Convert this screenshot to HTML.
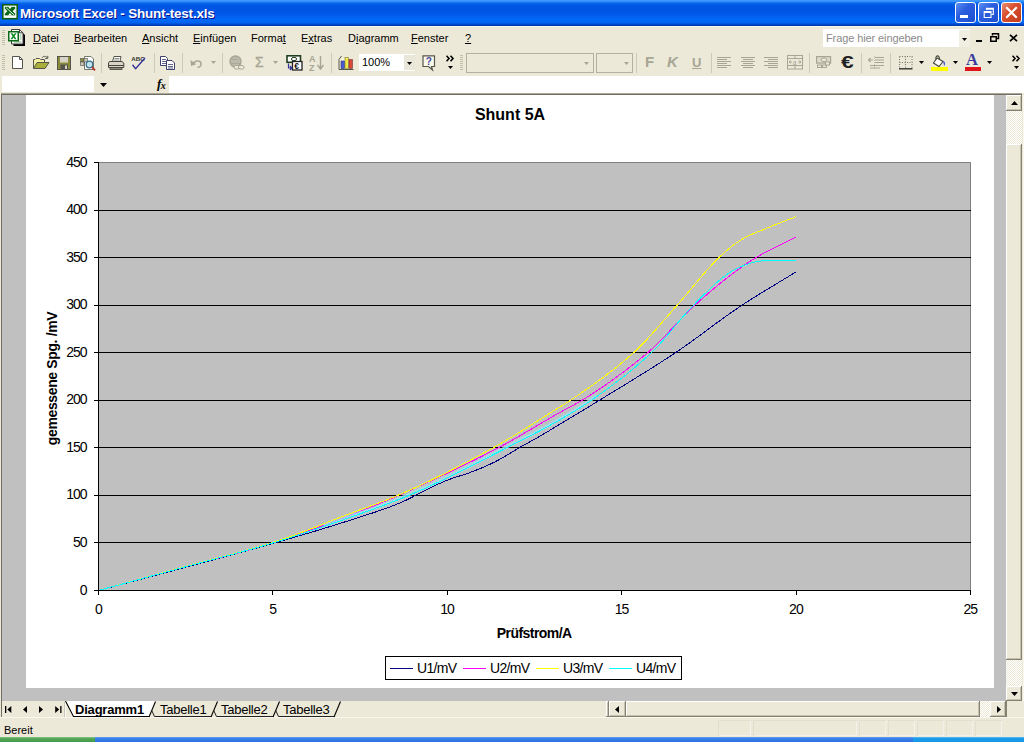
<!DOCTYPE html>
<html lang="de">
<head>
<meta charset="utf-8">
<title>Microsoft Excel - Shunt-test.xls</title>
<style>
html,body{margin:0;padding:0;}
body{width:1024px;height:742px;overflow:hidden;position:relative;background:#ece9d8;font-family:"Liberation Sans",sans-serif;font-size:11px;color:#000;}
.abs{position:absolute;}
#title{left:0;top:0;width:1024px;height:26px;background:linear-gradient(to bottom,#3f9bff 0%,#3793ff 5%,#1272f0 10%,#0560e6 15%,#0057e2 24%,#0054e3 40%,#0058ea 55%,#0263f5 68%,#0268f8 80%,#0263f0 87%,#0050d8 92%,#003fbb 96%,#0036a8 100%);}
#title .txt{left:20px;top:5px;color:#fff;font-weight:bold;font-size:13.5px;line-height:18px;white-space:nowrap;text-shadow:1px 1px 0 #0f1089;letter-spacing:-0.2px;}
.tbtn{top:3px;width:19px;height:19px;border:1px solid #fff;border-radius:3px;box-sizing:content-box;background:linear-gradient(135deg,#5b8ff0 0%,#2b5fe0 40%,#1c4fd0 100%);}
.tbtn.close{background:linear-gradient(135deg,#e8907a 0%,#d8502f 40%,#c23a1a 100%);}
#menubar{left:0;top:26px;width:1024px;height:24px;background:#ece9d8;border-top:1px solid #f6f5ee;box-sizing:border-box;}
.mi{top:8px;line-height:13px;font-size:11px;white-space:nowrap;}
.mi u{text-decoration:underline;}
#toolbar{left:0;top:50px;width:1024px;height:25px;background:#ece9d8;}
.sep{top:53px;width:1px;height:20px;background:#cdcaba;}
.ic{position:absolute;}
#formula{left:0;top:75px;width:1024px;height:18px;background:#ece9d8;}
#frame{left:0;top:93px;width:1024px;height:625px;background:#c0c0c0;}
#status{left:0;top:718px;width:1024px;height:19px;background:#ece9d8;}
#task{left:0;top:737px;width:1024px;height:5px;background:#2f74e0;}
.dither{background-color:#fff;background-image:linear-gradient(45deg,#ece9d8 25%,transparent 25%,transparent 75%,#ece9d8 75%),linear-gradient(45deg,#ece9d8 25%,transparent 25%,transparent 75%,#ece9d8 75%);background-size:2px 2px;background-position:0 0,1px 1px;}
.btn3d{background:#ece9d8;box-shadow:inset -1px -1px 0 #85826f,inset 1px 1px 0 #fff,inset -2px -2px 0 #c4c1b0;}
.tab{top:703px;font-size:13px;line-height:14px;white-space:nowrap;letter-spacing:-0.25px;}
</style>
</head>
<body>
<div id="title" class="abs">
<svg class="abs" style="left:2px;top:4px" width="16" height="16" viewBox="0 0 16 16" ><rect x="0" y="0" width="16" height="15.5" fill="#0a5c12"/><rect x="1.6" y="1.6" width="12.8" height="12.3" fill="#fff"/><rect x="2.8" y="2.8" width="10.4" height="8.6" fill="#0b6a17"/><path d="M6.2 2.8 L8 5 L9.8 2.8 Z M2.8 4.6 V9.8 L5.3 7.2 Z M13.2 4.6 V9.8 L10.7 7.2 Z M6 11.4 L8 9 L10 11.4 Z" fill="#fff"/><path d="M4 3.6 L12.2 11" stroke="#fff" stroke-width="0.9"/></svg>
<div class="abs txt">Microsoft Excel - Shunt-test.xls</div>
<div class="abs tbtn" style="left:955px;top:2px"></div>
<div class="abs" style="left:960px;top:15px;width:8px;height:3px;background:#fff"></div>
<div class="abs tbtn" style="left:978px;top:2px"></div>
<svg class="abs" style="left:983px;top:7px" width="12" height="12" viewBox="0 0 12 12" ><path d="M3.5 3 V1.2 H10.3 V7.5 H8.5 M3.5 2.2 H10.3" fill="none" stroke="#fff" stroke-width="1.1"/><path d="M1.2 4.5 H8 V10.5 H1.2 Z M1.2 5.5 H8" fill="none" stroke="#fff" stroke-width="1.1"/></svg>
<div class="abs tbtn close" style="left:1001px;top:2px"></div>
<svg class="abs" style="left:1005px;top:6px" width="13" height="13" viewBox="0 0 13 13" ><path d="M2 2 L11 11 M11 2 L2 11" stroke="#fff" stroke-width="2.2" stroke-linecap="square"/></svg>
</div>
<div id="menubar" class="abs"></div>
<svg class="abs" style="left:2px;top:30px" width="4" height="16" viewBox="0 0 4 16" ><rect x="0" y="0" width="3" height="1" fill="#c1beac"/><rect x="0" y="2" width="3" height="1" fill="#c1beac"/><rect x="0" y="4" width="3" height="1" fill="#c1beac"/><rect x="0" y="6" width="3" height="1" fill="#c1beac"/><rect x="0" y="8" width="3" height="1" fill="#c1beac"/><rect x="0" y="10" width="3" height="1" fill="#c1beac"/><rect x="0" y="12" width="3" height="1" fill="#c1beac"/><rect x="0" y="14" width="3" height="1" fill="#c1beac"/></svg>
<svg class="abs" style="left:8px;top:29px" width="18" height="18" viewBox="0 0 18 18" ><path d="M5.5 2.5 H13 L17 6 V17 H5.5 Z" fill="#000"/><path d="M3.5 0.5 H11.5 L15 3.8 V15 H3.5 Z" fill="#fff" stroke="#3a3a3a" stroke-width="1"/><path d="M11.5 0.5 V3.8 H15" fill="none" stroke="#3a3a3a" stroke-width="1"/><path d="M11.5 6 H13.5 M11.5 8 H13.5 M11.5 10 H13.5 M6 13 H13.5" stroke="#7bb07b" stroke-width="1"/><rect x="0.75" y="2.75" width="9.5" height="9" fill="#fff" stroke="#0b6a17" stroke-width="1.5"/><path d="M2.5 4.3 L4.5 4.3 L5.5 5.8 L6.8 4.3 L8.5 4.3 L6.5 7.2 L8.5 10.2 L6.7 10.2 L5.5 8.5 L4.3 10.2 L2.5 10.2 L4.6 7.2 Z" fill="#0b8a1d"/></svg>
<div class="abs mi" style="left:33px;top:32px"><u>D</u>atei</div>
<div class="abs mi" style="left:74px;top:32px"><u>B</u>earbeiten</div>
<div class="abs mi" style="left:142px;top:32px"><u>A</u>nsicht</div>
<div class="abs mi" style="left:193px;top:32px"><u>E</u>infügen</div>
<div class="abs mi" style="left:251px;top:32px">Forma<u>t</u></div>
<div class="abs mi" style="left:301px;top:32px">E<u>x</u>tras</div>
<div class="abs mi" style="left:348px;top:32px">D<u>i</u>agramm</div>
<div class="abs mi" style="left:411px;top:32px"><u>F</u>enster</div>
<div class="abs mi" style="left:465px;top:32px"><u>?</u></div>
<div class="abs" style="left:823px;top:29px;width:147px;height:18px;background:#fff"></div>
<div class="abs mi" style="left:826px;top:32px;color:#8a8a8a;letter-spacing:-0.1px">Frage hier eingeben</div>
<div class="abs" style="left:959px;top:30px;width:11px;height:17px;background:#ece9d8;opacity:.75"></div>
<svg class="abs" style="left:962.0px;top:37.5px" width="5" height="3" viewBox="0 0 5 3" ><path d="M0 0 H5 L2.5 3 Z" fill="#000"/></svg>
<div class="abs" style="left:976px;top:40px;width:6px;height:2px;background:#000"></div>
<svg class="abs" style="left:990px;top:33px" width="10" height="10" viewBox="0 0 10 10" ><path d="M2.5 2.5 V0.75 H8.5 V5.5 H6.5" fill="none" stroke="#000" stroke-width="1.5"/><rect x="0.75" y="3.75" width="5.5" height="4.5" fill="none" stroke="#000" stroke-width="1.5"/></svg>
<svg class="abs" style="left:1009px;top:34px" width="9" height="8" viewBox="0 0 9 8" ><path d="M1 0.8 L8 7.2 M8 0.8 L1 7.2" stroke="#000" stroke-width="1.7"/></svg>
<div id="toolbar" class="abs"></div>
<svg class="abs" style="left:2px;top:55px" width="4" height="16" viewBox="0 0 4 16" ><rect x="0" y="0" width="3" height="1" fill="#c1beac"/><rect x="0" y="2" width="3" height="1" fill="#c1beac"/><rect x="0" y="4" width="3" height="1" fill="#c1beac"/><rect x="0" y="6" width="3" height="1" fill="#c1beac"/><rect x="0" y="8" width="3" height="1" fill="#c1beac"/><rect x="0" y="10" width="3" height="1" fill="#c1beac"/><rect x="0" y="12" width="3" height="1" fill="#c1beac"/><rect x="0" y="14" width="3" height="1" fill="#c1beac"/></svg>
<svg class="abs" style="left:12px;top:56px" width="12" height="14" viewBox="0 0 12 14" ><path d="M0.5 0.5 H7.5 L10.5 3.5 V12.5 H0.5 Z" fill="#fff" stroke="#55554d"/><path d="M7.5 0.5 V3.5 H10.5" fill="none" stroke="#55554d"/></svg>
<svg class="abs" style="left:33px;top:55px" width="17" height="15" viewBox="0 0 17 15" ><path d="M0.5 13.5 V4.5 H2 L3 3.5 H6.5 L7.5 4.5 H11.5 V7" fill="#f4f2a0" stroke="#55554d"/><path d="M0.5 13.5 L4 7.5 H16 L12 13.5 Z" fill="#a9ad3a" stroke="#55554d"/><path d="M9 3 C10 0.8 13 0.8 14.5 3 M14.8 0.8 V3.4 H12.2" fill="none" stroke="#55554d"/></svg>
<svg class="abs" style="left:57px;top:56px" width="15" height="15" viewBox="0 0 15 15" ><rect x="0.5" y="0.5" width="13" height="13" fill="#8a8c3c" stroke="#55554d"/><rect x="3" y="1" width="8" height="5.5" fill="#d6d3c6"/><rect x="3.5" y="8.5" width="7.5" height="5" fill="#55554d"/><rect x="8" y="9.5" width="2" height="3.5" fill="#d6d3c6"/></svg>
<svg class="abs" style="left:80px;top:56px" width="16" height="16" viewBox="0 0 16 16" ><path d="M4.5 0.5 H11 L13.5 3 V13.5 H4.5 Z" fill="#fff" stroke="#77776c"/><rect x="0.5" y="2.5" width="3.5" height="3.5" fill="#8a8c3c" stroke="#55554d" stroke-width=".6"/><rect x="4" y="2.5" width="3.5" height="3.5" fill="#c8c6b6" stroke="#55554d" stroke-width=".6"/><rect x="0.5" y="6" width="3.5" height="3.5" fill="#c8c6b6" stroke="#55554d" stroke-width=".6"/><circle cx="9.5" cy="8.5" r="3.3" fill="#bfe4ee" stroke="#3b6f8c" stroke-width="1.3"/><path d="M12 11 L15 14.3" stroke="#b6302a" stroke-width="1.8"/></svg>
<div class="abs sep" style="left:101px"></div>
<svg class="abs" style="left:108px;top:56px" width="17" height="15" viewBox="0 0 17 15" ><path d="M4.5 5.5 L6 0.5 H13 L12 5.5" fill="#fff" stroke="#55554d"/><path d="M6.5 2.5 H11.5 M6 4 H11" stroke="#77776c" stroke-width=".8"/><path d="M1.5 5.5 H14 L15.8 7 V11.5 H0.5 V7 Z" fill="#d8d5c6" stroke="#45453e"/><path d="M0.5 9.5 H15.8" stroke="#45453e"/><rect x="2" y="11.5" width="12" height="2" fill="#8c8a7c" stroke="#45453e" stroke-width=".8"/></svg>
<svg class="abs" style="left:131px;top:55px" width="17" height="16" viewBox="0 0 17 16" ><text x="0.3" y="6" font-family="Liberation Sans, sans-serif" font-size="6.2" font-weight="bold" fill="#33332e" letter-spacing="0">ABC</text><path d="M1.5 9.8 L4.6 13.6 L14 3" fill="none" stroke="#333399" stroke-width="1.4"/></svg>
<div class="abs sep" style="left:154px"></div>
<svg class="abs" style="left:160px;top:56px" width="16" height="15" viewBox="0 0 16 15" ><path d="M0.5 0.5 H5.5 L7.5 2.5 V9.5 H0.5 Z" fill="#fff" stroke="#3f3f70"/><path d="M2 3.5 H6 M2 5.5 H6 M2 7.5 H6" stroke="#3f3f70" stroke-width=".8"/><path d="M6.5 4.5 H12 L14.5 7 V13.5 H6.5 Z" fill="#fff" stroke="#3f3f70"/><path d="M8 8.5 H13 M8 10.5 H13 M8 12 H13" stroke="#3f3f70" stroke-width=".8"/></svg>
<div class="abs sep" style="left:182px"></div>
<svg class="abs" style="left:190px;top:58px" width="14" height="11" viewBox="0 0 14 11" ><path d="M3.5 5 C6 1.8 11.5 2.5 11 6.5 C10.8 8.3 9.3 9.3 7.5 9.3" fill="none" stroke="#a7a594" stroke-width="1.4"/><path d="M0.5 2 L1 8 L6.3 6.3 Z" fill="#a7a594"/></svg>
<svg class="abs" style="left:210.5px;top:61px" width="5" height="3" viewBox="0 0 5 3" ><path d="M0 0 H5 L2.5 3 Z" fill="#a7a594"/></svg>
<div class="abs sep" style="left:222px"></div>
<svg class="abs" style="left:229px;top:55px" width="17" height="16" viewBox="0 0 17 16" ><circle cx="6.5" cy="6.5" r="5.5" fill="#bdbbac" stroke="#a7a594" stroke-width="1.4"/><path d="M3 4 C5 6 7 3 9 5 M2 8 C5 10 8 7 11 9" fill="none" stroke="#a7a594"/><rect x="5" y="10.5" width="5.5" height="3.5" rx="1.7" fill="#ece9d8" stroke="#a7a594"/><rect x="9.5" y="10.5" width="5.5" height="3.5" rx="1.7" fill="#ece9d8" stroke="#a7a594"/></svg>
<div class="abs" style="left:255px;top:53px;font-size:14px;line-height:18px;-webkit-text-stroke:0.3px #a7a594;color:#a7a594;font-family:'Liberation Sans',sans-serif">&#931;</div>
<svg class="abs" style="left:273.0px;top:61px" width="5" height="3" viewBox="0 0 5 3" ><path d="M0 0 H5 L2.5 3 Z" fill="#a7a594"/></svg>
<svg class="abs" style="left:286px;top:55px" width="17" height="16" viewBox="0 0 17 16" ><rect x="1" y="0.8" width="13.5" height="6.5" fill="#fff" stroke="#1f3d1f" stroke-width="1.6"/><ellipse cx="8" cy="4" rx="2.6" ry="1.7" fill="#fff" stroke="#1f3d1f"/><rect x="6.5" y="6.5" width="9.5" height="8.5" fill="#fff" stroke="#222" stroke-width="1.3"/><text x="8.3" y="13.8" font-size="8.5" font-weight="bold" font-family="Liberation Sans, sans-serif" fill="#111">&#8364;</text><path d="M2.5 8.5 V13 H5.5 M4 11 L5.8 13 L4 15" fill="none" stroke="#333399" stroke-width="1.2"/></svg>
<svg class="abs" style="left:309px;top:55px" width="16" height="16" viewBox="0 0 16 16" ><text x="0" y="7" font-size="9" font-weight="bold" font-family="Liberation Sans, sans-serif" fill="#a7a594">A</text><text x="0" y="15.5" font-size="9" font-weight="bold" font-family="Liberation Sans, sans-serif" fill="#a7a594">Z</text><path d="M11.5 1 V13 M8.5 10 L11.5 14 L14.5 10" fill="none" stroke="#a7a594" stroke-width="1.4"/></svg>
<div class="abs sep" style="left:331px"></div>
<svg class="abs" style="left:338px;top:55px" width="17" height="16" viewBox="0 0 17 16" ><path d="M3.5 1 L1 4.5 V14.5 H15.5" fill="#f4f2d8" stroke="#55554d"/><rect x="3" y="6" width="3.5" height="7.5" fill="#4a5ad0" stroke="#33337a" stroke-width=".6"/><rect x="7" y="2.5" width="3.5" height="11" fill="#f4e94a" stroke="#7a7a33" stroke-width=".6"/><rect x="11" y="4.5" width="3.5" height="9" fill="#d8483c" stroke="#7a3333" stroke-width=".6"/></svg>
<div class="abs" style="left:359px;top:54px;width:56px;height:17px;background:#fff"></div>
<div class="abs" style="left:404px;top:55px;width:11px;height:15px;background:#e9e7da"></div>
<div class="abs" style="left:362px;top:56px;font-size:11px;line-height:13px">100%</div>
<svg class="abs" style="left:407.0px;top:62px" width="5" height="3" viewBox="0 0 5 3" ><path d="M0 0 H5 L2.5 3 Z" fill="#000"/></svg>
<svg class="abs" style="left:422px;top:55px" width="15" height="17" viewBox="0 0 15 17" ><path d="M1 0.8 H12.5 V11.5 H9.5 L10.5 15 L6.5 11.5 H1 Z" fill="#fbfae8" stroke="#55554d" stroke-width="1.2"/><text x="3.8" y="10" font-size="10" font-weight="bold" font-family="Liberation Sans, sans-serif" fill="#4a4aa8">?</text></svg>
<svg class="abs" style="left:446px;top:55px" width="9" height="7" viewBox="0 0 9 7" ><path d="M0.5 0.7 L3 3.5 L0.5 6.3 M4.5 0.7 L7 3.5 L4.5 6.3" fill="none" stroke="#000" stroke-width="1.6"/></svg><svg class="abs" style="left:447.5px;top:66px" width="5" height="3" viewBox="0 0 5 3" ><path d="M0 0 H5 L2.5 3 Z" fill="#000"/></svg>
<svg class="abs" style="left:460px;top:55px" width="4" height="16" viewBox="0 0 4 16" ><rect x="0" y="0" width="3" height="1" fill="#c1beac"/><rect x="0" y="2" width="3" height="1" fill="#c1beac"/><rect x="0" y="4" width="3" height="1" fill="#c1beac"/><rect x="0" y="6" width="3" height="1" fill="#c1beac"/><rect x="0" y="8" width="3" height="1" fill="#c1beac"/><rect x="0" y="10" width="3" height="1" fill="#c1beac"/><rect x="0" y="12" width="3" height="1" fill="#c1beac"/><rect x="0" y="14" width="3" height="1" fill="#c1beac"/></svg>
<div class="abs" style="left:466px;top:53px;width:126px;height:18px;border:1px solid #b3b09f;box-sizing:content-box"></div>
<svg class="abs" style="left:584.0px;top:62px" width="5" height="3" viewBox="0 0 5 3" ><path d="M0 0 H5 L2.5 3 Z" fill="#a7a594"/></svg>
<div class="abs" style="left:596px;top:53px;width:35px;height:18px;border:1px solid #b3b09f;box-sizing:content-box"></div>
<svg class="abs" style="left:624.0px;top:62px" width="5" height="3" viewBox="0 0 5 3" ><path d="M0 0 H5 L2.5 3 Z" fill="#a7a594"/></svg>
<div class="abs sep" style="left:636px"></div>
<div class="abs" style="left:645px;top:53px;font-size:15px;line-height:17px;font-weight:bold;color:#a7a594">F</div>
<div class="abs" style="left:667px;top:53px;font-size:15px;line-height:17px;font-weight:bold;font-style:italic;color:#a7a594">K</div>
<div class="abs" style="left:692px;top:55px;font-size:13px;line-height:15px;font-weight:bold;color:#a7a594;text-decoration:underline">U</div>
<div class="abs sep" style="left:711px"></div>
<svg class="abs" style="left:717px;top:57px" width="14" height="12" viewBox="0 0 14 12" ><rect x="0" y="0" width="14" height="1" fill="#a7a594"/><rect x="0" y="2" width="10" height="1" fill="#a7a594"/><rect x="0" y="4" width="14" height="1" fill="#a7a594"/><rect x="0" y="6" width="10" height="1" fill="#a7a594"/><rect x="0" y="8" width="14" height="1" fill="#a7a594"/><rect x="0" y="10" width="10" height="1" fill="#a7a594"/></svg>
<svg class="abs" style="left:741px;top:57px" width="14" height="12" viewBox="0 0 14 12" ><rect x="0.0" y="0" width="14" height="1" fill="#a7a594"/><rect x="2.0" y="2" width="10" height="1" fill="#a7a594"/><rect x="0.0" y="4" width="14" height="1" fill="#a7a594"/><rect x="2.0" y="6" width="10" height="1" fill="#a7a594"/><rect x="0.0" y="8" width="14" height="1" fill="#a7a594"/><rect x="2.0" y="10" width="10" height="1" fill="#a7a594"/></svg>
<svg class="abs" style="left:764px;top:57px" width="14" height="12" viewBox="0 0 14 12" ><rect x="0" y="0" width="14" height="1" fill="#a7a594"/><rect x="4" y="2" width="10" height="1" fill="#a7a594"/><rect x="0" y="4" width="14" height="1" fill="#a7a594"/><rect x="4" y="6" width="10" height="1" fill="#a7a594"/><rect x="0" y="8" width="14" height="1" fill="#a7a594"/><rect x="4" y="10" width="10" height="1" fill="#a7a594"/></svg>
<svg class="abs" style="left:787px;top:55px" width="17" height="15" viewBox="0 0 17 15" ><rect x="0.5" y="0.5" width="15" height="13.5" fill="none" stroke="#a7a594"/><path d="M0.5 3.5 H15.5 M0.5 10.5 H15.5 M8 0.5 V3.5 M8 10.5 V14 M2 7 H5 M11 7 H14 M3.5 5.5 L2 7 L3.5 8.5 M12.5 5.5 L14 7 L12.5 8.5" fill="none" stroke="#a7a594"/><text x="5.8" y="9.6" font-size="6.5" font-family="Liberation Sans, sans-serif" fill="#a7a594">a</text></svg>
<div class="abs sep" style="left:809px"></div>
<svg class="abs" style="left:816px;top:56px" width="16" height="13" viewBox="0 0 16 13" ><rect x="0.6" y="0.6" width="14" height="6.5" fill="#dddacb" stroke="#a7a594" stroke-width="1.2"/><ellipse cx="8" cy="3.8" rx="3" ry="1.8" fill="#ece9d8" stroke="#a7a594"/><rect x="1.5" y="9" width="4" height="2.5" fill="none" stroke="#a7a594"/><rect x="6.5" y="9" width="4" height="2.5" fill="none" stroke="#a7a594"/><rect x="9.5" y="6" width="4" height="3" fill="#ece9d8" stroke="#a7a594"/></svg>
<div class="abs" style="left:841px;top:52px;font-size:16.5px;line-height:20px;font-weight:bold;color:#222;transform:scaleX(1.38);transform-origin:0 0">&#8364;</div>
<div class="abs sep" style="left:861px"></div>
<svg class="abs" style="left:868px;top:56px" width="17" height="14" viewBox="0 0 17 14" ><path d="M7 1.5 H16 M7 4 H16 M7 6.5 H16 M2 9.5 H16 M2 12 H12" stroke="#a7a594" stroke-width="1.2"/><path d="M0.5 4 H5 M2.5 2 L0.5 4 L2.5 6" fill="none" stroke="#a7a594" stroke-width="1.2"/><path d="M6.5 0 V14" stroke="#a7a594" stroke-width=".6" stroke-dasharray="1 1"/></svg>
<div class="abs sep" style="left:890px"></div>
<svg class="abs" style="left:899px;top:56px" width="14" height="14" viewBox="0 0 14 14" ><path d="M0.5 0.5 H13.5 M0.5 6.5 H13.5 M0.5 0.5 V12 M6.5 0.5 V12 M13 0.5 V12" stroke="#77776c" stroke-width="1" stroke-dasharray="1 1.5" fill="none"/><path d="M0 12.8 H13.5" stroke="#33332e" stroke-width="1.4"/></svg>
<svg class="abs" style="left:919.0px;top:61px" width="5" height="3" viewBox="0 0 5 3" ><path d="M0 0 H5 L2.5 3 Z" fill="#000"/></svg>
<svg class="abs" style="left:931px;top:54px" width="17" height="17" viewBox="0 0 17 17" ><path d="M6 4 L12 7.5 L8 12.5 L2.5 9 Z" fill="#fff" stroke="#44443c" stroke-width="1.1"/><path d="M5 5.5 C4 1 8.5 0.5 8.5 5" fill="none" stroke="#44443c" stroke-width="1.1"/><path d="M12 7 C14.5 7.5 14.5 10 13.5 12 C12.5 10.5 12.5 9 12 7 Z" fill="#4a5ad0"/><rect x="0" y="13" width="17" height="4" fill="#ffff00"/></svg>
<svg class="abs" style="left:953.0px;top:61px" width="5" height="3" viewBox="0 0 5 3" ><path d="M0 0 H5 L2.5 3 Z" fill="#000"/></svg>
<div class="abs" style="left:966px;top:51px;font-size:16.5px;line-height:17px;font-weight:bold;color:#3a3aa0;font-family:'Liberation Serif',serif">A</div>
<div class="abs" style="left:965px;top:67px;width:16px;height:4px;background:#e0141c"></div>
<svg class="abs" style="left:987.0px;top:61px" width="5" height="3" viewBox="0 0 5 3" ><path d="M0 0 H5 L2.5 3 Z" fill="#000"/></svg>
<svg class="abs" style="left:1012px;top:55px" width="9" height="7" viewBox="0 0 9 7" ><path d="M0.5 0.7 L3 3.5 L0.5 6.3 M4.5 0.7 L7 3.5 L4.5 6.3" fill="none" stroke="#000" stroke-width="1.6"/></svg><svg class="abs" style="left:1013.5px;top:66px" width="5" height="3" viewBox="0 0 5 3" ><path d="M0 0 H5 L2.5 3 Z" fill="#000"/></svg>
<div id="formula" class="abs"></div>
<div class="abs" style="left:2px;top:76px;width:92px;height:16px;background:#fff"></div>
<div class="abs" style="left:169px;top:76px;width:855px;height:17px;background:#fff"></div>
<svg class="abs" style="left:100.0px;top:83px" width="7" height="4" viewBox="0 0 7 4" ><path d="M0 0 H7 L3.5 4 Z" fill="#000"/></svg>
<div class="abs" style="left:157px;top:77px;font-size:11px;line-height:13px;font-style:italic;font-weight:bold;font-family:'Liberation Serif',serif"><span style="font-size:13px">f</span><span style="font-size:10px;position:relative;top:1px;left:-0.5px">x</span></div>
<div id="frame" class="abs"></div>
<div class="abs" style="left:0;top:93px;width:1024px;height:1px;background:#aca899"></div>
<div class="abs" style="left:0;top:94px;width:1024px;height:1px;background:#716f64"></div>
<div class="abs" style="left:0;top:93px;width:1px;height:625px;background:#ece9d8"></div>
<div class="abs" style="left:1px;top:94px;width:1px;height:624px;background:#716f64"></div>
<svg class="abs" style="left:26px;top:95px" width="968" height="593" viewBox="26 95 968 593" font-family="Liberation Sans, sans-serif">
<rect x="26" y="95" width="968" height="593" fill="#fff"/>
<rect x="98.5" y="162.5" width="872" height="428" fill="#c0c0c0" stroke="#808080" stroke-width="1"/>
<line x1="98.5" x2="970.5" y1="542.5" y2="542.5" stroke="#000" stroke-width="1" shape-rendering="crispEdges"/>
<line x1="98.5" x2="970.5" y1="495.5" y2="495.5" stroke="#000" stroke-width="1" shape-rendering="crispEdges"/>
<line x1="98.5" x2="970.5" y1="447.5" y2="447.5" stroke="#000" stroke-width="1" shape-rendering="crispEdges"/>
<line x1="98.5" x2="970.5" y1="400.5" y2="400.5" stroke="#000" stroke-width="1" shape-rendering="crispEdges"/>
<line x1="98.5" x2="970.5" y1="352.5" y2="352.5" stroke="#000" stroke-width="1" shape-rendering="crispEdges"/>
<line x1="98.5" x2="970.5" y1="305.5" y2="305.5" stroke="#000" stroke-width="1" shape-rendering="crispEdges"/>
<line x1="98.5" x2="970.5" y1="257.5" y2="257.5" stroke="#000" stroke-width="1" shape-rendering="crispEdges"/>
<line x1="98.5" x2="970.5" y1="210.5" y2="210.5" stroke="#000" stroke-width="1" shape-rendering="crispEdges"/>
<polyline points="98.5,590.5 102.9,589.3 107.2,588.2 111.6,587.0 115.9,585.8 120.3,584.7 124.7,583.5 129.0,582.4 133.4,581.2 137.7,580.0 142.1,578.9 146.5,577.7 150.8,576.6 155.2,575.4 159.5,574.2 163.9,573.1 168.3,571.9 172.6,570.7 177.0,569.5 181.3,568.4 185.7,567.2 190.1,566.0 194.4,564.9 198.8,563.7 203.1,562.5 207.5,561.3 211.9,560.2 216.2,559.0 220.6,557.8 224.9,556.7 229.3,555.5 233.7,554.3 238.0,553.1 242.4,551.9 246.7,550.7 251.1,549.5 255.5,548.3 259.8,547.1 264.2,545.9 268.5,544.7 272.9,543.4 277.3,542.2 281.6,540.9 286.0,539.7 290.3,538.4 294.7,537.1 299.1,535.8 303.4,534.6 307.8,533.3 312.1,532.0 316.5,530.7 320.9,529.3 325.2,528.0 329.6,526.7 333.9,525.3 338.3,524.0 342.7,522.6 347.0,521.2 351.4,519.8 355.7,518.4 360.1,517.0 364.5,515.6 368.8,514.2 373.2,512.8 377.5,511.3 381.9,509.8 386.3,508.3 390.6,506.7 395.0,505.0 399.3,503.2 403.7,501.3 408.1,499.2 412.4,497.0 416.8,494.8 421.1,492.6 425.5,490.4 429.9,488.2 434.2,486.0 438.6,483.9 442.9,482.0 447.3,480.2 451.7,478.6 456.0,477.1 460.4,475.7 464.7,474.4 469.1,472.9 473.5,471.2 477.8,469.5 482.2,467.7 486.5,465.8 490.9,463.8 495.3,461.7 499.6,459.4 504.0,456.9 508.3,454.3 512.7,451.6 517.1,449.0 521.4,446.5 525.8,444.1 530.1,441.7 534.5,439.2 538.9,436.8 543.2,434.2 547.6,431.7 551.9,429.0 556.3,426.4 560.7,423.8 565.0,421.1 569.4,418.5 573.7,415.9 578.1,413.2 582.5,410.6 586.8,408.0 591.2,405.3 595.5,402.6 599.9,400.0 604.3,397.3 608.6,394.6 613.0,392.0 617.3,389.3 621.7,386.6 626.1,384.0 630.4,381.3 634.8,378.6 639.1,375.9 643.5,373.2 647.9,370.5 652.2,367.8 656.6,365.0 660.9,362.2 665.3,359.4 669.7,356.5 674.0,353.7 678.4,350.7 682.7,347.7 687.1,344.7 691.5,341.5 695.8,338.4 700.2,335.2 704.5,332.0 708.9,328.7 713.3,325.5 717.6,322.3 722.0,319.1 726.3,316.0 730.7,312.9 735.1,309.9 739.4,306.9 743.8,304.0 748.1,301.2 752.5,298.4 756.9,295.7 761.2,293.0 765.6,290.3 769.9,287.7 774.3,285.1 778.7,282.4 783.0,279.8 787.4,277.2 791.7,274.5 796.1,271.9" fill="none" stroke="#000080" stroke-width="1" stroke-linejoin="round" shape-rendering="crispEdges"/>
<polyline points="98.5,590.5 102.9,589.3 107.2,588.1 111.6,586.9 115.9,585.7 120.3,584.6 124.7,583.4 129.0,582.2 133.4,581.0 137.7,579.8 142.1,578.6 146.5,577.4 150.8,576.2 155.2,575.0 159.5,573.9 163.9,572.7 168.3,571.5 172.6,570.3 177.0,569.1 181.3,567.9 185.7,566.7 190.1,565.5 194.4,564.4 198.8,563.2 203.1,562.1 207.5,560.9 211.9,559.8 216.2,558.7 220.6,557.5 224.9,556.4 229.3,555.2 233.7,554.1 238.0,552.9 242.4,551.7 246.7,550.6 251.1,549.3 255.5,548.1 259.8,546.9 264.2,545.6 268.5,544.3 272.9,542.9 277.3,541.6 281.6,540.2 286.0,538.8 290.3,537.3 294.7,535.8 299.1,534.3 303.4,532.8 307.8,531.3 312.1,529.7 316.5,528.1 320.9,526.5 325.2,524.9 329.6,523.3 333.9,521.6 338.3,520.0 342.7,518.3 347.0,516.6 351.4,515.0 355.7,513.3 360.1,511.5 364.5,509.8 368.8,508.0 373.2,506.2 377.5,504.4 381.9,502.5 386.3,500.7 390.6,498.8 395.0,496.9 399.3,495.0 403.7,493.0 408.1,491.1 412.4,489.2 416.8,487.2 421.1,485.2 425.5,483.3 429.9,481.3 434.2,479.3 438.6,477.2 442.9,475.2 447.3,473.1 451.7,471.1 456.0,469.0 460.4,466.9 464.7,464.8 469.1,462.6 473.5,460.5 477.8,458.3 482.2,456.1 486.5,453.9 490.9,451.6 495.3,449.4 499.6,447.1 504.0,444.8 508.3,442.4 512.7,439.9 517.1,437.4 521.4,434.9 525.8,432.3 530.1,429.8 534.5,427.2 538.9,424.6 543.2,422.0 547.6,419.5 551.9,416.9 556.3,414.4 560.7,412.0 565.0,409.6 569.4,407.3 573.7,405.0 578.1,402.5 582.5,400.0 586.8,397.3 591.2,394.5 595.5,391.7 599.9,388.8 604.3,385.8 608.6,382.8 613.0,379.7 617.3,376.5 621.7,373.3 626.1,370.0 630.4,366.6 634.8,363.2 639.1,359.7 643.5,356.1 647.9,352.4 652.2,348.6 656.6,344.4 660.9,340.1 665.3,335.6 669.7,331.0 674.0,326.4 678.4,321.7 682.7,317.2 687.1,312.7 691.5,308.4 695.8,304.4 700.2,300.4 704.5,296.6 708.9,292.8 713.3,289.1 717.6,285.5 722.0,281.9 726.3,278.5 730.7,275.2 735.1,271.9 739.4,268.7 743.8,265.6 748.1,262.6 752.5,259.8 756.9,257.1 761.2,254.6 765.6,252.2 769.9,250.0 774.3,247.8 778.7,245.6 783.0,243.5 787.4,241.4 791.7,239.3 796.1,237.1" fill="none" stroke="#ff00ff" stroke-width="1" stroke-linejoin="round" shape-rendering="crispEdges"/>
<polyline points="98.5,590.5 102.9,589.3 107.2,588.1 111.6,586.9 115.9,585.7 120.3,584.5 124.7,583.3 129.0,582.1 133.4,580.9 137.7,579.7 142.1,578.5 146.5,577.3 150.8,576.1 155.2,574.9 159.5,573.6 163.9,572.4 168.3,571.2 172.6,570.0 177.0,568.8 181.3,567.6 185.7,566.4 190.1,565.2 194.4,564.1 198.8,562.9 203.1,561.8 207.5,560.6 211.9,559.5 216.2,558.3 220.6,557.2 224.9,556.1 229.3,554.9 233.7,553.8 238.0,552.6 242.4,551.4 246.7,550.2 251.1,549.0 255.5,547.7 259.8,546.5 264.2,545.2 268.5,543.8 272.9,542.5 277.3,541.1 281.6,539.6 286.0,538.1 290.3,536.5 294.7,535.0 299.1,533.3 303.4,531.7 307.8,530.0 312.1,528.3 316.5,526.6 320.9,524.9 325.2,523.2 329.6,521.5 333.9,519.8 338.3,518.1 342.7,516.4 347.0,514.7 351.4,513.1 355.7,511.4 360.1,509.8 364.5,508.2 368.8,506.6 373.2,505.0 377.5,503.4 381.9,501.8 386.3,500.1 390.6,498.3 395.0,496.6 399.3,494.7 403.7,492.8 408.1,490.9 412.4,488.9 416.8,487.0 421.1,484.9 425.5,482.9 429.9,480.8 434.2,478.7 438.6,476.5 442.9,474.4 447.3,472.2 451.7,469.9 456.0,467.7 460.4,465.4 464.7,463.1 469.1,460.8 473.5,458.5 477.8,456.1 482.2,453.8 486.5,451.4 490.9,449.0 495.3,446.6 499.6,444.1 504.0,441.6 508.3,439.0 512.7,436.4 517.1,433.8 521.4,431.1 525.8,428.4 530.1,425.7 534.5,422.9 538.9,420.2 543.2,417.4 547.6,414.7 551.9,411.9 556.3,409.2 560.7,406.5 565.0,403.8 569.4,401.0 573.7,398.0 578.1,395.1 582.5,392.1 586.8,389.1 591.2,386.1 595.5,383.0 599.9,379.8 604.3,376.6 608.6,373.3 613.0,370.0 617.3,366.5 621.7,363.0 626.1,359.3 630.4,355.5 634.8,351.6 639.1,347.5 643.5,343.0 647.9,338.4 652.2,333.6 656.6,328.7 660.9,323.7 665.3,318.7 669.7,313.7 674.0,308.7 678.4,303.8 682.7,298.8 687.1,293.7 691.5,288.4 695.8,283.2 700.2,278.0 704.5,272.9 708.9,268.0 713.3,263.3 717.6,258.9 722.0,254.8 726.3,250.9 730.7,247.2 735.1,243.8 739.4,240.9 743.8,238.3 748.1,236.0 752.5,234.0 756.9,232.2 761.2,230.5 765.6,228.8 769.9,226.9 774.3,225.1 778.7,223.4 783.0,221.7 787.4,220.0 791.7,218.4 796.1,216.7" fill="none" stroke="#ffff00" stroke-width="1" stroke-linejoin="round" shape-rendering="crispEdges"/>
<polyline points="325.2,525.2 329.6,523.7 333.9,522.2 338.3,520.7 342.7,519.2 347.0,517.6 351.4,516.1 355.7,514.6 360.1,513.0 364.5,511.5 368.8,509.9 373.2,508.4 377.5,506.8 381.9,505.2 386.3,503.5 390.6,501.9 395.0,500.2 399.3,498.5 403.7,496.7 408.1,495.0 412.4,493.1 416.8,491.2 421.1,489.3 425.5,487.4 429.9,485.4 434.2,483.3 438.6,481.3 442.9,479.2 447.3,477.1 451.7,474.9 456.0,472.8 460.4,470.6 464.7,468.4 469.1,466.2 473.5,464.0 477.8,461.8 482.2,459.5 486.5,457.3 490.9,455.1 495.3,452.8 499.6,450.6 504.0,448.4 508.3,446.1 512.7,443.9 517.1,441.7 521.4,439.5 525.8,437.3 530.1,435.0 534.5,432.8 538.9,430.5 543.2,428.2 547.6,425.8 551.9,423.4 556.3,421.0 560.7,418.5 565.0,416.0 569.4,413.4 573.7,410.8 578.1,408.1 582.5,405.4 586.8,402.5 591.2,399.6 595.5,396.6" fill="none" stroke="#9ddff0" stroke-opacity="0.8" stroke-width="3.2" stroke-linejoin="round" stroke-linecap="round"/>
<polyline points="98.5,590.5 102.9,589.3 107.2,588.1 111.6,586.9 115.9,585.7 120.3,584.6 124.7,583.4 129.0,582.2 133.4,581.0 137.7,579.8 142.1,578.6 146.5,577.4 150.8,576.2 155.2,575.0 159.5,573.9 163.9,572.7 168.3,571.5 172.6,570.3 177.0,569.1 181.3,567.9 185.7,566.7 190.1,565.5 194.4,564.4 198.8,563.2 203.1,562.0 207.5,560.9 211.9,559.7 216.2,558.6 220.6,557.4 224.9,556.3 229.3,555.1 233.7,554.0 238.0,552.8 242.4,551.6 246.7,550.4 251.1,549.2 255.5,548.0 259.8,546.8 264.2,545.5 268.5,544.2 272.9,542.9 277.3,541.6 281.6,540.3 286.0,538.9 290.3,537.6 294.7,536.2 299.1,534.8 303.4,533.3 307.8,531.9 312.1,530.4 316.5,529.0 320.9,527.5 325.2,526.0 329.6,524.5 333.9,523.0 338.3,521.5 342.7,520.0 347.0,518.4 351.4,516.9 355.7,515.4 360.1,513.8 364.5,512.3 368.8,510.7 373.2,509.2 377.5,507.6 381.9,506.0 386.3,504.3 390.6,502.7 395.0,501.0 399.3,499.3 403.7,497.5 408.1,495.8 412.4,493.9 416.8,492.0 421.1,490.1 425.5,488.2 429.9,486.2 434.2,484.1 438.6,482.1 442.9,480.0 447.3,477.9 451.7,475.7 456.0,473.6 460.4,471.4 464.7,469.2 469.1,467.0 473.5,464.8 477.8,462.6 482.2,460.3 486.5,458.1 490.9,455.9 495.3,453.6 499.6,451.4 504.0,449.2 508.3,446.9 512.7,444.7 517.1,442.5 521.4,440.3 525.8,438.1 530.1,435.8 534.5,433.6 538.9,431.3 543.2,429.0 547.6,426.6 551.9,424.2 556.3,421.8 560.7,419.3 565.0,416.8 569.4,414.2 573.7,411.6 578.1,408.9 582.5,406.2 586.8,403.3 591.2,400.4 595.5,397.4 599.9,394.3 604.3,391.2 608.6,388.0 613.0,384.8 617.3,381.5 621.7,378.1 626.1,374.7 630.4,371.1 634.8,367.5 639.1,363.8 643.5,359.9 647.9,356.0 652.2,351.9 656.6,347.5 660.9,342.8 665.3,337.7 669.7,332.6 674.0,327.3 678.4,322.1 682.7,316.9 687.1,312.0 691.5,307.3 695.8,302.9 700.2,298.5 704.5,294.2 708.9,289.9 713.3,285.7 717.6,281.8 722.0,278.2 726.3,274.8 730.7,271.9 735.1,269.4 739.4,267.3 743.8,265.5 748.1,263.9 752.5,262.5 756.9,261.5 761.2,261.0 765.6,260.7 769.9,260.5 774.3,260.5 778.7,260.5 783.0,260.5 787.4,260.5 791.7,260.5 796.1,260.5" fill="none" stroke="#00ffff" stroke-width="1" stroke-linejoin="round" shape-rendering="crispEdges"/>
<g stroke="#000" stroke-width="1" shape-rendering="crispEdges">
<line x1="98.5" x2="98.5" y1="162" y2="591"/>
<line x1="98" x2="971" y1="590.5" y2="590.5"/>
<line x1="94" x2="98" y1="590.5" y2="590.5"/>
<line x1="94" x2="98" y1="542.5" y2="542.5"/>
<line x1="94" x2="98" y1="495.5" y2="495.5"/>
<line x1="94" x2="98" y1="447.5" y2="447.5"/>
<line x1="94" x2="98" y1="400.5" y2="400.5"/>
<line x1="94" x2="98" y1="352.5" y2="352.5"/>
<line x1="94" x2="98" y1="305.5" y2="305.5"/>
<line x1="94" x2="98" y1="257.5" y2="257.5"/>
<line x1="94" x2="98" y1="210.5" y2="210.5"/>
<line x1="94" x2="98" y1="162.5" y2="162.5"/>
<line x1="98.5" x2="98.5" y1="590" y2="595"/>
<line x1="272.5" x2="272.5" y1="590" y2="595"/>
<line x1="447.5" x2="447.5" y1="590" y2="595"/>
<line x1="621.5" x2="621.5" y1="590" y2="595"/>
<line x1="796.5" x2="796.5" y1="590" y2="595"/>
<line x1="970.5" x2="970.5" y1="590" y2="595"/>
</g>
<g font-size="14" fill="#000" letter-spacing="-1">
<text x="86.6" y="594.5" text-anchor="end">0</text>
<text x="86.6" y="546.9" text-anchor="end">50</text>
<text x="86.6" y="499.4" text-anchor="end">100</text>
<text x="86.6" y="451.8" text-anchor="end">150</text>
<text x="86.6" y="404.3" text-anchor="end">200</text>
<text x="86.6" y="356.7" text-anchor="end">250</text>
<text x="86.6" y="309.2" text-anchor="end">300</text>
<text x="86.6" y="261.6" text-anchor="end">350</text>
<text x="86.6" y="214.1" text-anchor="end">400</text>
<text x="86.6" y="166.5" text-anchor="end">450</text>
<text x="98.3" y="614" text-anchor="middle">0</text>
<text x="272.7" y="614" text-anchor="middle">5</text>
<text x="447.1" y="614" text-anchor="middle">10</text>
<text x="621.5" y="614" text-anchor="middle">15</text>
<text x="795.9" y="614" text-anchor="middle">20</text>
<text x="970.3" y="614" text-anchor="middle">25</text>
</g>
<text x="510" y="120" font-size="16" font-weight="bold" text-anchor="middle">Shunt 5A</text>
<text x="534.2" y="637.5" font-size="14" font-weight="bold" text-anchor="middle" letter-spacing="-0.55">Prüfstrom/A</text>
<text transform="translate(57.2,378.5) rotate(-90)" font-size="14" font-weight="bold" text-anchor="middle" letter-spacing="-0.37">gemessene Spg. /mV</text>
<rect x="385.5" y="656.5" width="296" height="23" fill="#fff" stroke="#000" stroke-width="1" shape-rendering="crispEdges"/>
<line x1="390" x2="413" y1="668.5" y2="668.5" stroke="#000080" stroke-width="1" shape-rendering="crispEdges"/>
<text x="417" y="672.5" font-size="14" letter-spacing="-0.7">U1/mV</text>
<line x1="463" x2="486" y1="668.5" y2="668.5" stroke="#ff00ff" stroke-width="1" shape-rendering="crispEdges"/>
<text x="490" y="672.5" font-size="14" letter-spacing="-0.7">U2/mV</text>
<line x1="536" x2="559" y1="668.5" y2="668.5" stroke="#ffff00" stroke-width="1" shape-rendering="crispEdges"/>
<text x="563" y="672.5" font-size="14" letter-spacing="-0.7">U3/mV</text>
<line x1="609" x2="632" y1="668.5" y2="668.5" stroke="#00ffff" stroke-width="1" shape-rendering="crispEdges"/>
<text x="636" y="672.5" font-size="14" letter-spacing="-0.7">U4/mV</text>
</svg>
<div class="abs dither" style="left:1006px;top:95px;width:16px;height:606px"></div>
<div class="abs btn3d" style="left:1006px;top:95px;width:16px;height:16px"></div>
<svg class="abs" style="left:1010.5px;top:101px" width="7" height="4" viewBox="0 0 7 4" ><path d="M0 4 L3.5 0 L7 4 Z" fill="#000"/></svg>
<div class="abs btn3d" style="left:1006px;top:144px;width:16px;height:516px"></div>
<div class="abs btn3d" style="left:1006px;top:686px;width:16px;height:15px"></div>
<svg class="abs" style="left:1010.5px;top:692px" width="7" height="4" viewBox="0 0 7 4" ><path d="M0 0 L3.5 4 L7 0 Z" fill="#000"/></svg>
<div class="abs" style="left:1022px;top:93px;width:2px;height:625px;background:#ece9d8"></div>
<div class="abs" style="left:1023px;top:95px;width:1px;height:623px;background:#f8f7f0"></div>
<div class="abs" style="left:2px;top:701px;width:1022px;height:17px;background:#ece9d8"></div>
<div class="abs" style="left:0;top:717px;width:1024px;height:1px;background:#f8f7f0"></div>
<div class="abs btn3d" style="left:606px;top:701px;width:3px;height:16px"></div>
<div class="abs dither" style="left:609px;top:701px;width:397px;height:16px"></div>
<div class="abs btn3d" style="left:609px;top:701px;width:17px;height:16px"></div>
<svg class="abs" style="left:615px;top:705.5px" width="4" height="7" viewBox="0 0 4 7" ><path d="M4 0 L0 3.5 L4 7 Z" fill="#000"/></svg>
<div class="abs btn3d" style="left:626px;top:701px;width:354px;height:16px"></div>
<div class="abs btn3d" style="left:990px;top:701px;width:16px;height:16px"></div>
<svg class="abs" style="left:997px;top:705.5px" width="4" height="7" viewBox="0 0 4 7" ><path d="M0 0 L4 3.5 L0 7 Z" fill="#000"/></svg>
<div class="abs" style="left:1006px;top:701px;width:1px;height:16px;background:#85826f"></div>
<svg class="abs" style="left:5px;top:706px" width="7" height="7" viewBox="0 0 7 7" ><rect x="0" y="0" width="1.3" height="7" fill="#000"/><path d="M6.3 0 L2.3 3.5 L6.3 7 Z" fill="#000"/></svg>
<svg class="abs" style="left:23px;top:706px" width="4" height="7" viewBox="0 0 4 7" ><path d="M4 0 L0 3.5 L4 7 Z" fill="#000"/></svg>
<svg class="abs" style="left:39px;top:706px" width="4" height="7" viewBox="0 0 4 7" ><path d="M0 0 L4 3.5 L0 7 Z" fill="#000"/></svg>
<svg class="abs" style="left:55px;top:706px" width="7" height="7" viewBox="0 0 7 7" ><rect x="5.2" y="0" width="1.3" height="7" fill="#000"/><path d="M0.2 0 L4.2 3.5 L0.2 7 Z" fill="#000"/></svg>
<div class="abs" style="left:64px;top:702px;width:1px;height:15px;background:#c9c6b5"></div>
<div class="abs" style="left:65px;top:702px;width:1px;height:15px;background:#fff"></div>
<svg class="abs" style="left:62px;top:701px" width="290" height="17" viewBox="0 0 290 17" ><path d="M3.5 0 L11.5 15.5 H87.5 L93.5 0 Z" fill="#fff"/><path d="M3.5 0 L11.5 15.5 H87.5" fill="none" stroke="#000" stroke-width="1.1"/><path d="M87.0 16 L93.5 0.5" fill="none" stroke="#000" stroke-width="1.1"/><path d="M89.5 9 L92.5 15.5 H149.5" fill="none" stroke="#222" stroke-width="1"/><path d="M149.0 16 L155.5 0.5" fill="none" stroke="#000" stroke-width="1.1"/><path d="M151.5 9 L154.5 15.5 H211.5" fill="none" stroke="#222" stroke-width="1"/><path d="M211.0 16 L217.5 0.5" fill="none" stroke="#000" stroke-width="1.1"/><path d="M213.5 9 L216.5 15.5 H272.5" fill="none" stroke="#222" stroke-width="1"/><path d="M272.0 16 L278.5 0.5" fill="none" stroke="#000" stroke-width="1.1"/></svg>
<div class="abs tab" style="left:75px;font-weight:bold;letter-spacing:-0.2px">Diagramm1</div>
<div class="abs tab" style="left:160px">Tabelle1</div>
<div class="abs tab" style="left:221px">Tabelle2</div>
<div class="abs tab" style="left:283px">Tabelle3</div>
<div id="status" class="abs"></div>
<div class="abs" style="left:4px;top:724px;font-size:11px;line-height:13px">Bereit</div>
<div class="abs" style="left:718px;top:720px;width:33px;height:16px;box-shadow:inset 1px 1px 0 #e2dfd0,inset -1px -1px 0 #f3f2ea"></div>
<div class="abs" style="left:753px;top:720px;width:104px;height:16px;box-shadow:inset 1px 1px 0 #e2dfd0,inset -1px -1px 0 #f3f2ea"></div>
<div class="abs" style="left:859px;top:720px;width:27px;height:16px;box-shadow:inset 1px 1px 0 #e2dfd0,inset -1px -1px 0 #f3f2ea"></div>
<div class="abs" style="left:888px;top:720px;width:27px;height:16px;box-shadow:inset 1px 1px 0 #e2dfd0,inset -1px -1px 0 #f3f2ea"></div>
<div class="abs" style="left:917px;top:720px;width:27px;height:16px;box-shadow:inset 1px 1px 0 #e2dfd0,inset -1px -1px 0 #f3f2ea"></div>
<div class="abs" style="left:946px;top:720px;width:27px;height:16px;box-shadow:inset 1px 1px 0 #e2dfd0,inset -1px -1px 0 #f3f2ea"></div>
<div class="abs" style="left:975px;top:720px;width:27px;height:16px;box-shadow:inset 1px 1px 0 #e2dfd0,inset -1px -1px 0 #f3f2ea"></div>
<div id="task" class="abs" style="background:linear-gradient(to bottom,#6aa2f0 0,#3a80ea 1.5px,#2b71e0 100%)"></div>
<div class="abs" style="left:0;top:737px;width:95px;height:5px;background:linear-gradient(to bottom,#8cc88c 0,#56a85a 1.5px,#3f9a45 100%)"></div>
<div class="abs" style="left:913px;top:737px;width:111px;height:5px;background:linear-gradient(to bottom,#5ec0f8 0,#1c9be8 1.5px,#1896e6 100%)"></div>
</body>
</html>
